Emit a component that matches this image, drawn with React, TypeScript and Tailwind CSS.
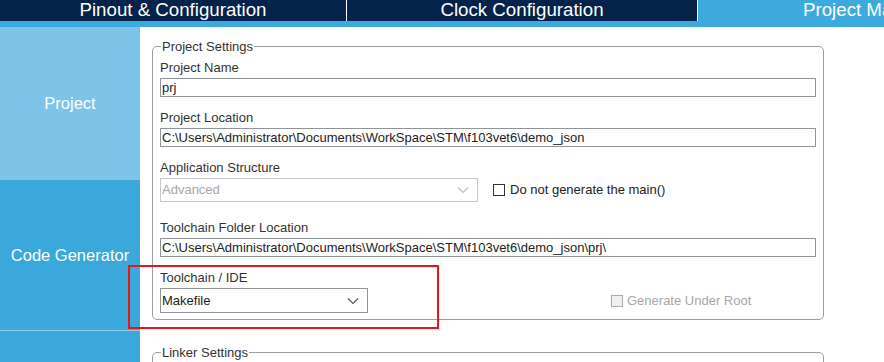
const Chevron = ({ color }: { color: string }) => (
  <svg width="12" height="8" viewBox="0 0 12 8" fill="none">
    <path d="M1 1.5 L6 6.5 L11 1.5" stroke={color} strokeWidth="1.1" />
  </svg>
)

function Field({ label, value, className = '' }: { label: string; value: string; className?: string }) {
  return (
    <div className={`flex flex-col ${className}`}>
      <div className="h-[15px] leading-[15px] text-[13px] text-[#333]">{label}</div>
      <div className="w-[656px] mt-[3px] h-[19px] border border-[#8f9499] px-[1px] text-[13px] leading-[17px] text-[#222] overflow-hidden whitespace-nowrap">
        {value}
      </div>
    </div>
  )
}

export default function App() {
  return (
    <div className="w-[884px] h-[362px] overflow-hidden bg-white font-['Liberation_Sans',Arial,sans-serif]">
      {/* Top tabs */}
      <div className="flex h-[21px] bg-[#03234b] text-white text-[18.7px] leading-[19px]">
        <div className="w-[346px] text-center whitespace-nowrap">Pinout &amp; Configuration</div>
        <div className="w-[1px] bg-white" />
        <div className="w-[350px] text-center whitespace-nowrap">Clock Configuration</div>
        <div className="w-[1px] bg-white" />
        <div className="flex-1 bg-[#3caadc] pl-[105px] whitespace-nowrap overflow-hidden">Project Manager</div>
      </div>
      <div className="h-[6px] bg-[#3caadc]" />

      <div className="flex">
        {/* Sidebar */}
        <div className="w-[140px] flex flex-col text-white text-[16.5px]">
          <div className="h-[153px] bg-[#7dc5e8] flex items-center justify-center">Project</div>
          <div className="h-[150px] bg-[#3aa8da] flex items-center justify-center">Code Generator</div>
          <div className="h-[1px] bg-[#8ccbea]" />
          <div className="h-[40px] bg-[#3aa8da]" />
        </div>

        {/* Main */}
        <div className="relative flex-1 pl-[12px] pt-[12px]">
          <fieldset className="w-[672px] h-[281px] border border-[#9a9ea3] rounded-[5px] px-[7px]">
            <legend className="px-[1px] ml-[1px] text-[13px] leading-[15px] text-[#333]">Project Settings</legend>
            <div className="flex flex-col pt-[6px]">
              <Field label="Project Name" value="prj" />
              <Field className="mt-[13px]" label="Project Location" value="C:\Users\Administrator\Documents\WorkSpace\STM\f103vet6\demo_json" />
              <div className="flex flex-col mt-[13px]">
                <div className="h-[15px] leading-[15px] text-[13px] text-[#333]">Application Structure</div>
                <div className="flex items-center mt-[3px]">
                  <div className="w-[318px] h-[24px] border border-[#c6c9cc] flex items-center justify-between pl-[1px] pr-[8px] text-[13px] text-[#a6a6a6]">
                    <span>Advanced</span>
                    <Chevron color="#b8bcc0" />
                  </div>
                  <div className="ml-[15px] w-[12px] h-[12px] border border-[#333] bg-white" />
                  <span className="ml-[5px] text-[13px] text-[#222]">Do not generate the main()</span>
                </div>
              </div>
              <Field className="mt-[18px]" label="Toolchain Folder Location" value="C:\Users\Administrator\Documents\WorkSpace\STM\f103vet6\demo_json\prj\" />
              <div className="flex flex-col mt-[13px]">
                <div className="h-[15px] leading-[15px] text-[13px] text-[#333]">Toolchain / IDE</div>
                <div className="flex items-center mt-[3px]">
                  <div className="w-[208px] h-[25px] border border-[#8f9499] flex items-center justify-between pl-[1px] pr-[8px] text-[13px] text-[#222]">
                    <span>Makefile</span>
                    <Chevron color="#555" />
                  </div>
                  <div className="ml-[243px] w-[12px] h-[12px] border border-[#a8acb0] bg-[#eef0f2]" />
                  <span className="ml-[4px] text-[13px] text-[#a6a6a6]">Generate Under Root</span>
                </div>
              </div>
            </div>
          </fieldset>

          <fieldset className="mt-[25px] w-[672px] h-[60px] border border-[#9a9ea3] rounded-[5px] px-[7px]">
            <legend className="px-[1px] ml-[1px] text-[13px] leading-[15px] text-[#333]">Linker Settings</legend>
          </fieldset>

          {/* red highlight */}
          <div className="absolute left-[-12px] top-[238px] w-[311px] h-[64px] border-2 border-[#e8161b]" />
        </div>
      </div>
    </div>
  )
}
